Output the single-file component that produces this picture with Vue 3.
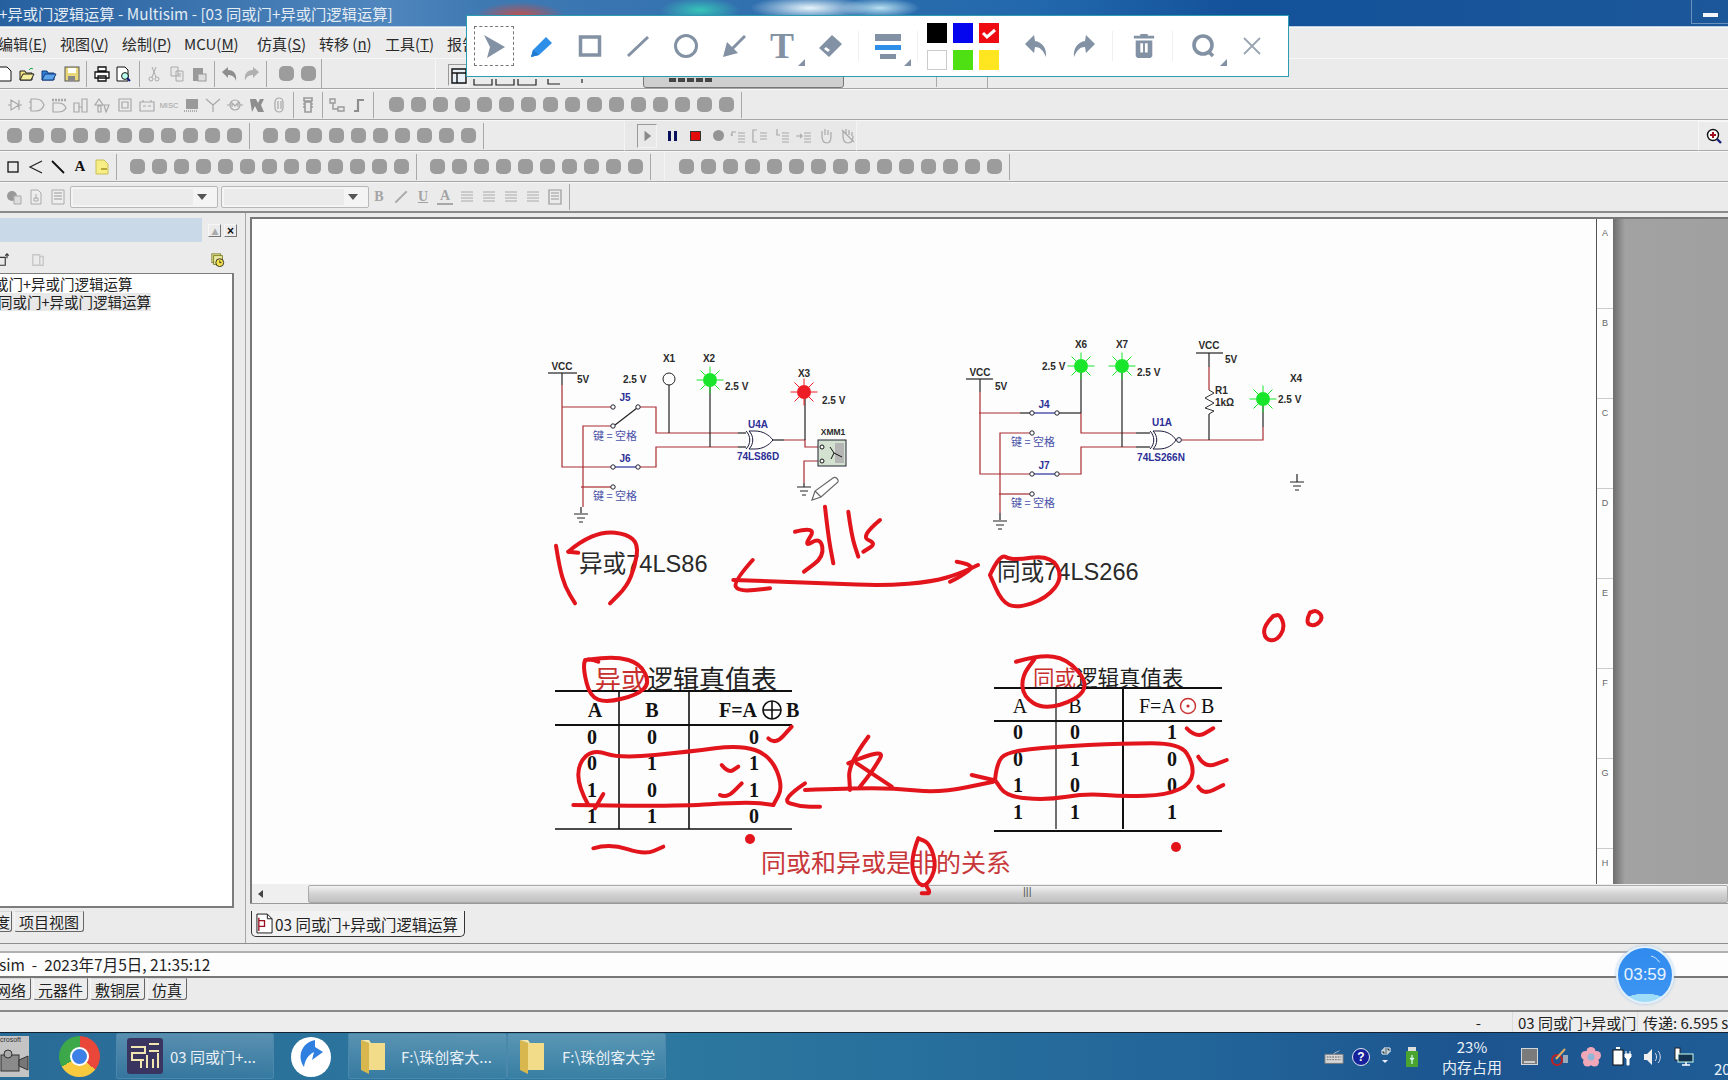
<template>
  <div class="screen">
    <div class="titlebar">
      <span class="title-text">+异或门逻辑运算 - Multisim - [03 同或门+异或门逻辑运算]</span>
      <div class="win-min"><i></i></div>
    </div>

    <div class="menu">
      <span v-for="m in menus" :key="m.t" class="menu-item">{{ m.t }}(<u>{{ m.k }}</u>)</span>
      <span class="menu-item">报告</span>
    </div>

    <div class="tb-row">
      <div class="tb-group first">
        <svg v-for="ic in fileIcons" :key="ic.id" class="ico" viewBox="0 0 16 16" v-html="ic.svg"></svg>
        <span class="sep"></span>
        <svg v-for="ic in printIcons" :key="ic.id" class="ico" viewBox="0 0 16 16" v-html="ic.svg"></svg>
        <span class="sep"></span>
        <svg v-for="ic in editIcons" :key="ic.id" class="ico" viewBox="0 0 16 16" v-html="ic.svg"></svg>
        <span class="sep"></span>
        <svg v-for="ic in undoRedo" :key="ic.id" class="ico" viewBox="0 0 16 16" v-html="ic.svg"></svg>
        <span class="sep"></span>
      </div>
      <div class="tb-group blobs pad-row1">
        <i v-for="n in 2" :key="n" class="blob"></i>
      </div>
      <div class="row1-hidden">
        <span class="view-pressed">
          <svg viewBox="0 0 16 16"><path d="M1 1h14v14H1zM1 5h14M6 5v10" fill="#e8f0f8" stroke="#111" stroke-width="1.4" /></svg>
        </span>
        <svg class="peek" viewBox="0 0 200 20">
          <path d="M2 2v6h18V2M24 2v6h18V2M46 2v6h18V2M76 2v5h12M110 2v4" fill="none" stroke="#222" stroke-width="1.2" />
        </svg>
        <span class="view-btn"><i></i></span>
        <span class="sim-edge"></span>
      </div>
    </div>

    <div class="tb-row">
      <div class="tb-group comps">
        <svg v-for="ic in compIcons" :key="ic.id" class="ico" viewBox="0 0 16 16" v-html="ic.svg"></svg>
        <span class="sep"></span>
        <svg class="ico" viewBox="0 0 16 16"><path d="M4 1h8v3H4zM5 5h6v10H5zM3 7h2M11 7h2M3 10h2M11 10h2" fill="none" stroke="#9a9a9a" stroke-width="1.6" /></svg>
        <span class="sep"></span>
        <svg class="ico" viewBox="0 0 16 16"><path d="M1 2h5v4H1zM9 10h6v4H9zM4 6v6h5" fill="none" stroke="#9a9a9a" stroke-width="1.4" /></svg>
        <svg class="ico" viewBox="0 0 16 16"><path d="M3 14h4V3h6" fill="none" stroke="#8e8e8e" stroke-width="2.2" /></svg>
        <span class="sep"></span>
      </div>
      <div class="tb-group blobs pad-row2">
        <i v-for="n in 16" :key="n" class="blob"></i>
        <span class="sep end"></span>
      </div>
    </div>

    <div class="tb-row">
      <div class="tb-group blobs pad-row3a">
        <i v-for="n in 11" :key="n" class="blob"></i>
        <span class="sep end"></span>
      </div>
      <div class="tb-group blobs pad-row3b">
        <i v-for="n in 10" :key="n" class="blob"></i>
        <span class="sep end"></span>
      </div>
      <div class="sim-group">
        <span class="play"><svg viewBox="0 0 12 16"><path d="M2 1l9 7-9 7z" fill="#8b8b8b" /></svg></span>
        <span class="pause"><i></i><i></i></span>
        <span class="stop"></span>
        <span class="rec"></span>
        <svg v-for="ic in simIcons" :key="ic.id" class="ico" viewBox="0 0 16 16" v-html="ic.svg"></svg>
      </div>
      <div class="zoom-group">
        <svg class="ico" viewBox="0 0 16 16">
          <circle cx="7" cy="7" r="5.5" fill="#fff" stroke="#111" stroke-width="1.4" />
          <path d="M7 4v6M4 7h6" stroke="#a01020" stroke-width="2" />
          <path d="M11 11l4 4" stroke="#16207a" stroke-width="2.4" />
        </svg>
      </div>
    </div>

    <div class="tb-row">
      <div class="tb-group draw">
        <svg class="ico" viewBox="0 0 16 16"><rect x="2" y="3" width="10" height="10" fill="none" stroke="#111" stroke-width="1.3" /></svg>
        <svg class="ico" viewBox="0 0 16 16"><path d="M14 2L2 8l12 6" fill="none" stroke="#222" stroke-width="1.2" /></svg>
        <svg class="ico" viewBox="0 0 16 16"><path d="M2 2l12 12" stroke="#111" stroke-width="1.8" /></svg>
        <span class="draw-a">A</span>
        <svg class="ico" viewBox="0 0 16 16"><path d="M2 1h8l4 4v10H2z" fill="#f7ee86" stroke="#c9bf5a" /><path d="M7 10h6" stroke="#b9a93a" stroke-width="2" /></svg>
        <span class="sep"></span>
      </div>
      <div class="tb-group blobs pad-row4a">
        <i v-for="n in 13" :key="n" class="blob"></i>
        <span class="sep end"></span>
      </div>
      <div class="tb-group blobs pad-row4b">
        <i v-for="n in 10" :key="n" class="blob"></i>
        <span class="sep end"></span>
      </div>
      <div class="tb-group blobs pad-row4c">
        <i v-for="n in 15" :key="n" class="blob"></i>
        <span class="sep end"></span>
      </div>
    </div>

    <div class="tb-row last">
      <div class="tb-group format">
        <svg v-for="ic in fmtIcons" :key="ic.id" class="ico" viewBox="0 0 16 16" v-html="ic.svg"></svg>
        <div class="combo"><span class="combo-in"></span><span class="caret"></span></div>
        <div class="combo"><span class="combo-in"></span><span class="caret"></span></div>
        <b class="fmt b">B</b>
        <span class="fmt i"></span>
        <span class="fmt u">U</span>
        <span class="fmt a">A</span>
        <svg v-for="n in 4" :key="n" class="ico" viewBox="0 0 16 16"><path d="M2 3h12M2 6h12M2 9h12M2 12h12" stroke="#aaa" stroke-width="1" /></svg>
        <svg class="ico" viewBox="0 0 16 16"><path d="M2 1h12v14H2zM4 4h8M4 7h8M4 10h8" fill="none" stroke="#999" stroke-width="1.2" /></svg>
        <span class="sep end"></span>
      </div>
    </div>

    <div class="work">
      <aside class="panel">
        <div class="panel-head">
          <span class="panel-title"></span>
          <span class="mini-btn up">▴</span>
          <span class="mini-btn">×</span>
        </div>
        <div class="panel-tools">
          <svg class="small-ico" viewBox="0 0 16 16"><path d="M-2 5h8v9h-8zM8 1v5M6 3l2-2 2 2" fill="none" stroke="#333" stroke-width="1.3" /></svg>
          <svg class="small-ico gray" viewBox="0 0 16 16"><path d="M2 2h8v12H2zM10 4h4v10h-4" fill="none" stroke="#c8c8c8" stroke-width="1.6" /></svg>
          <svg class="small-ico clock" viewBox="0 0 16 16">
            <rect x="1" y="1" width="10" height="10" fill="#e9e9a0" stroke="#7a7a20" />
            <rect x="3" y="3" width="10" height="10" fill="#e9e9a0" stroke="#7a7a20" />
            <circle cx="10" cy="11" r="4.5" fill="#f5e34a" stroke="#222" />
            <path d="M10 8.5V11h2" fill="none" stroke="#222" />
          </svg>
        </div>
        <div class="tree">
          <div class="tree-row one">或门+异或门逻辑运算</div>
          <div class="tree-row two">同或门+异或门逻辑运算</div>
        </div>
        <div class="panel-tabs">
          <span class="tab clipped">度</span>
          <span class="tab">项目视图</span>
        </div>
      </aside>

      <section class="doc">
        <div class="sheet-row">
          <div class="sheet"></div>
          <div class="ruler">
            <span v-for="l in rulerLetters" :key="l">{{ l }}</span>
          </div>
          <div class="outside"></div>
        </div>
        <div class="hscroll">
          <span class="arrow-left"></span>
          <div class="thumb"><span class="grip">|||</span></div>
        </div>
        <div class="doc-tabs">
          <div class="doc-tab">
            <svg class="doc-ico" viewBox="0 0 18 22"><path d="M1 1h11l5 5v15H1z" fill="#fff" stroke="#111" /><path d="M12 1v5h5" fill="none" stroke="#111" /><path d="M3 5v14M3 8h6v6H3" fill="none" stroke="#9a1020" stroke-width="1.4" /></svg>
            <span>03 同或门+异或门逻辑运算</span>
          </div>
        </div>
      </section>
    </div>

    <div class="log">
      <div class="log-line">sim&nbsp; -&nbsp; 2023年7月5日, 21:35:12</div>
      <div class="log-tabs">
        <span class="tab clip-left">网络</span>
        <span class="tab">元器件</span>
        <span class="tab">敷铜层</span>
        <span class="tab">仿真</span>
      </div>
    </div>

    <div class="status">
      <span class="st-dash">-</span>
      <span class="st-cell name">03 同或门+异或门</span>
      <span class="st-cell">传递: 6.595 s</span>
    </div>

    <footer class="taskbar">
      <div class="cam-app">
        <span class="cam-text">crosoft</span>
        <svg viewBox="0 0 30 30"><rect x="1" y="9" width="18" height="16" fill="#8b8b8b" stroke="#333" /><path d="M19 14l9-4v14l-9-4z" fill="#777" stroke="#333" /><circle cx="8" cy="8" r="4" fill="#aaa" stroke="#333" /></svg>
      </div>
      <div class="chrome"><i></i></div>
      <div class="task active">
        <svg class="task-ico" viewBox="0 0 36 36">
          <rect width="36" height="36" rx="3" fill="#3a3560" />
          <path d="M4 9h14v6H5v7h12M22 6h10M22 13h10M14 30V21M20 30V17M26 30V21M31 30V15" fill="none" stroke="#f2e6b0" stroke-width="2" />
        </svg>
        <span>03 同或门+...</span>
      </div>
      <div class="feather">
        <svg viewBox="0 0 40 40"><ellipse cx="20" cy="20" rx="20" ry="20" fill="#fff" /><path d="M24 3C10 6 6 20 13 30c1-7 4-12 10-15l-2 8 11-8-8-5z" fill="#2f7fe0" /></svg>
      </div>
      <div class="task folder-task wide">
        <svg class="folder" viewBox="0 0 26 36"><path d="M1 2l8 3v31l-8-4z" fill="#d8b84e" /><path d="M9 5h16v27H9z" fill="#f2dc8a" /><path d="M1 2h8l2 3H9z" fill="#f7e7a8" /></svg>
        <span>F:\珠创客大...</span>
      </div>
      <div class="task folder-task second">
        <svg class="folder" viewBox="0 0 26 36"><path d="M1 2l8 3v31l-8-4z" fill="#d8b84e" /><path d="M9 5h16v27H9z" fill="#f2dc8a" /><path d="M1 2h8l2 3H9z" fill="#f7e7a8" /></svg>
        <span>F:\珠创客大学</span>
      </div>
      <div class="tray">
        <svg class="t-ico kb" viewBox="0 0 22 16"><path d="M1 5h20v10H1z" fill="#d8d8d8" stroke="#777" /><path d="M3 8h16M3 11h16" stroke="#888" stroke-width="1.4" stroke-dasharray="2 1" /><path d="M11 5c0-3 5-2 6-4" fill="none" stroke="#bbb" /></svg>
        <span class="t-help">?</span>
        <div class="t-chevron"><svg viewBox="0 0 10 8"><path d="M3 1h6v4H3zM1 3h6v4H1z" fill="#134" stroke="#fff" /></svg><i></i></div>
        <svg class="t-usb" viewBox="0 0 12 20"><rect x="2" width="8" height="5" fill="#ddd" /><rect y="4" width="12" height="16" rx="1" fill="#4aa52e" /><path d="M6 8v9M4 11l2 2 2-2" fill="none" stroke="#dff" stroke-width="1.2" /></svg>
        <div class="mem"><span>23%</span><span>内存占用</span></div>
        <span class="t-box"><i></i></span>
        <svg class="t-ico" viewBox="0 0 20 20"><circle cx="7" cy="13" r="5" fill="none" stroke="#c02020" stroke-width="2" /><path d="M6 12L15 2" stroke="#e0b060" stroke-width="2" /><rect x="13" y="8" width="5" height="8" fill="#9ab" /></svg>
        <svg class="t-ico" viewBox="0 0 20 20"><g fill="#f0a8b8"><circle cx="10" cy="4.5" r="4.5" /><circle cx="15.5" cy="8.5" r="4.5" /><circle cx="13.5" cy="15" r="4.5" /><circle cx="6.5" cy="15" r="4.5" /><circle cx="4.5" cy="8.5" r="4.5" /></g><circle cx="10" cy="10" r="3.5" fill="#8fb6d8" /></svg>
        <svg class="t-ico" viewBox="0 0 20 20"><rect x="1" y="3" width="10" height="15" fill="#fff" stroke="#111" /><path d="M4 1h4" stroke="#fff" stroke-width="2" /><path d="M13 7h6v3l-2 2v6h-2v-6l-2-2zM14 4v3M18 4v3" fill="#fff" stroke="#fff" /></svg>
        <svg class="t-ico" viewBox="0 0 20 20"><path d="M1 7h3l5-5v16l-5-5H1z" fill="#eee" /><path d="M12 6c2 2 2 6 0 8M15 4c3 3 3 9 0 12" fill="none" stroke="#dde" /></svg>
        <svg class="t-ico" viewBox="0 0 20 20"><rect x="1" y="1" width="5" height="12" fill="#fff" stroke="#222" /><rect x="4" y="7" width="15" height="8" fill="#13324e" stroke="#cfe" /><path d="M8 18h8M12 15v3" stroke="#fff" stroke-width="1.5" /></svg>
      </div>
      <span class="clock-year">20</span>
    </footer>

    <!-- 画布上的电路、真值表和手写批注 -->
    <svg class="canvas-layer" viewBox="0 0 1728 1080">
      <polyline v-for="(w, i) in wires" :key="'w' + i" :points="w.p" :stroke="w.c" fill="none" stroke-width="1.2" />
      <circle v-for="(c, i) in terminals" :key="'t' + i" :cx="c[0]" :cy="c[1]" r="2.2" fill="#fff" stroke="#223" />
      <g v-for="(g, i) in grounds" :key="'g' + i" stroke="#222">
        <path :d="`M${g[0] - 7} ${g[1]}h14M${g[0] - 4} ${g[1] + 4}h8M${g[0] - 2} ${g[1] + 8}h4`" />
      </g>
      <g v-for="(l, i) in leds" :key="'l' + i">
        <path :d="raysOf(l)" :stroke="l.c" stroke-width="1" />
        <circle :cx="l.x" :cy="l.y" r="7" :fill="l.c" />
      </g>
      <circle cx="669" cy="379" r="6" fill="#fff" stroke="#222" />

      <!-- 异或门 / 同或门 -->
      <path class="gate" d="M746 431c5 5 5 13 0 18M749 431h6c8 0 14 4 18 9-4 5-10 9-18 9h-6c5-5 5-13 0-18z" />
      <path class="gate" d="M1150 431c5 5 5 13 0 18M1153 431h6c8 0 14 4 17 9-3 5-9 9-17 9h-6c5-5 5-13 0-18z" />
      <circle class="gate" cx="1179" cy="440" r="2.4" />

      <path d="M1209 390l5 3-9 5 9 5-9 5 9 3-5 3" fill="none" stroke="#333" />

      <rect x="818" y="440" width="28" height="26" fill="#d3e2d0" stroke="#223" />
      <rect x="835" y="443" width="9" height="20" fill="#b5b5b5" />
      <path d="M830 447l4 6 8 4M834 453l-3 6" fill="none" stroke="#111" />
      <circle cx="822" cy="447" r="2" fill="#fff" stroke="#111" />
      <circle cx="822" cy="461" r="2" fill="#fff" stroke="#111" />
      <path d="M812 500l3-9 18-13c3-2 6 2 5 4l-17 15zM815 491l6 6" fill="#fff" stroke="#666" stroke-width="1.2" />

      <text v-for="(t, i) in labels" :key="'x' + i" :x="t.x" :y="t.y" :class="t.k" :text-anchor="t.a || 'start'">{{ t.t }}</text>

      <text x="579" y="572" class="big-label">异或74LS86</text>
      <text x="997" y="580" class="big-label">同或74LS266</text>

      <!-- 真值表 -->
      <text x="595" y="689" class="tt-title"><tspan fill="#c8302f">异或</tspan>逻辑真值表</text>
      <path d="M555 691h237M555 725h237" stroke="#111" stroke-width="2" />
      <path d="M555 829h237" stroke="#111" stroke-width="1.4" />
      <path d="M619 691v138M689 691v138" stroke="#111" stroke-width="1.6" />
      <text x="595" y="717" class="cell bold" text-anchor="middle">A</text>
      <text x="652" y="717" class="cell bold" text-anchor="middle">B</text>
      <text x="719" y="717" class="cell bold">F=A</text>
      <circle cx="772" cy="710" r="9" fill="none" stroke="#111" stroke-width="1.6" />
      <path d="M763 710h18M772 701v18" stroke="#111" stroke-width="1.6" />
      <text x="786" y="717" class="cell bold">B</text>
      <g v-for="(r, i) in table1" :key="'a' + i">
        <text v-for="(v, j) in r" :key="j" :x="[592, 652, 754][j]" :y="744 + i * 26.4" class="cell bold" text-anchor="middle">{{ v }}</text>
      </g>

      <text x="1033" y="686" class="tt-title small"><tspan fill="#c8302f">同或</tspan>逻辑真值表</text>
      <path d="M994 688h228M994 721h228M994 831h228" stroke="#111" stroke-width="2" />
      <path d="M1056 688v141" stroke="#111" stroke-width="1.2" />
      <path d="M1123 688v141" stroke="#111" stroke-width="2" />
      <text x="1020" y="713" class="cell" text-anchor="middle">A</text>
      <text x="1075" y="713" class="cell" text-anchor="middle">B</text>
      <text x="1139" y="713" class="cell">F=A</text>
      <circle cx="1188" cy="706" r="7.5" fill="none" stroke="#c8302f" stroke-width="1.4" />
      <circle cx="1188" cy="706" r="1.6" fill="#c8302f" />
      <text x="1201" y="713" class="cell">B</text>
      <g v-for="(r, i) in table2" :key="'b' + i">
        <text v-for="(v, j) in r" :key="j" :x="[1018, 1075, 1172][j]" :y="739 + i * 26.6" class="cell bold" text-anchor="middle">{{ v }}</text>
      </g>

      <text x="761" y="872" class="note-red">同或和异或是非的关系</text>

      <!-- 红色手写 -->
      <path v-for="(d, i) in inkPaths" :key="'i' + i" :d="d" class="ink" />
      <circle cx="750" cy="839" r="5" fill="#e2141c" />
      <circle cx="1176" cy="847" r="5" fill="#e2141c" />
    </svg>

    <!-- 悬浮的屏幕标注工具条 -->
    <div class="annot-bar">
      <div class="tool selected">
        <svg viewBox="0 0 24 24"><path class="fill" d="M2 1l21 12L5 24l3-11z" /></svg>
      </div>
      <div class="tool"><svg viewBox="0 0 24 24"><path d="M1 23l2-7L16 3l6 6L9 21z" fill="#2e8fe8" /><path d="M1 23l2-7 6 5z" fill="#1f7ad0" /></svg></div>
      <div class="tool"><svg viewBox="0 0 24 24"><rect class="stroke" x="2.5" y="3" width="19" height="18" stroke-width="3.5" /></svg></div>
      <div class="tool"><svg viewBox="0 0 24 24"><path class="stroke" d="M2 22L22 3" stroke-width="3" /></svg></div>
      <div class="tool"><svg viewBox="0 0 24 24"><circle class="stroke" cx="12" cy="12" r="10.5" stroke-width="3" /></svg></div>
      <div class="tool"><svg viewBox="0 0 24 24"><path class="stroke" d="M23 2L10 15" stroke-width="3" /><path class="fill" d="M1 23l4-15 11 11z" /></svg></div>
      <div class="tool corner"><span class="tool-t">T</span></div>
      <div class="tool"><svg viewBox="0 0 24 24"><path class="fill" d="M14 1l10 9-13 13L1 14zM8 13l-2 2 4 3 2-2z" fill-rule="evenodd" /></svg></div>
      <span class="bar-sep"></span>
      <div class="tool corner wide-tool">
        <div class="widths"><i class="w1"></i><i class="w2"></i><i class="w3"></i></div>
      </div>
      <span class="bar-sep"></span>
      <div class="swatches">
        <i v-for="c in swatches" :key="c.c" class="swatch" :class="{ white: c.c === '#fff' }" :style="{ background: c.c }">
          <svg v-if="c.on" viewBox="0 0 20 20"><path d="M4 10l4 4 8-7" fill="none" stroke="#fff" stroke-width="3" /></svg>
        </i>
      </div>
      <span class="bar-sep hide"></span>
      <div class="tool act"><svg viewBox="0 0 24 24"><path class="fill" d="M1 10l9-9 1 6c7 1 12 7 11 16-3-7-6-10-11-10l-1 6z" /></svg></div>
      <div class="tool act"><svg viewBox="0 0 24 24"><path class="fill" d="M23 10l-9-9-1 6C6 8 1 14 2 23c3-7 6-10 11-10l1 6z" /></svg></div>
      <span class="bar-sep wider"></span>
      <div class="tool act"><svg viewBox="0 0 24 26"><path class="fill" d="M8 2V0h8v2h7v3H1V2zM3 7h18v17l-2 2H5l-2-2zM8 10v10h3V10zM13 10v10h3V10z" fill-rule="evenodd" /></svg></div>
      <span class="bar-sep wider"></span>
      <div class="tool act corner"><svg viewBox="0 0 24 24"><circle class="stroke" cx="11" cy="11" r="9" stroke-width="3.6" /><path class="stroke" d="M16 17l5 5" stroke-width="3.6" /></svg></div>
      <div class="tool act"><svg viewBox="0 0 24 24"><path d="M4 4l16 16M20 4L4 20" stroke="#9aa5b2" stroke-width="1.8" fill="none" /></svg></div>
    </div>

    <div class="timer">
      <svg class="timer-shine" viewBox="0 0 20 20"><path d="M3 3c5 1 9 4 12 9" fill="none" stroke="#d5ecff" stroke-width="1.4" /></svg>
      <span>03:59</span>
    </div>
  </div>
</template>

<script setup>
const menus = [
  { t: "编辑", k: "E" },
  { t: "视图", k: "V" },
  { t: "绘制", k: "P" },
  { t: "MCU", k: "M" },
  { t: "仿真", k: "S" },
  { t: "转移 ", k: "n" },
  { t: "工具", k: "T" },
];

const icon = (id, svg) => ({ id, svg });

const fileIcons = [
  icon("new", '<path d="M1 1h10l4 4v10H1z" fill="#fff" stroke="#111"/>'),
  icon("open", '<path d="M1 5h5l1 2h6v7H1z" fill="#f2e27a" stroke="#222"/><path d="M1 14l3-6h11l-3 6z" fill="#f7ee9c" stroke="#222"/><path d="M10 4c1-2 3-2 4-1" stroke="#1a4" fill="none"/>'),
  icon("open2", '<path d="M1 5h5l1 2h6v7H1z" fill="#2f7ed8" stroke="#143c7a"/><path d="M1 14l3-6h11l-3 6z" fill="#5ba3ea" stroke="#143c7a"/>'),
  icon("save", '<rect x="1" y="1" width="14" height="14" fill="#e9d87a" stroke="#555"/><rect x="4" y="2" width="8" height="5" fill="#fff"/><rect x="4" y="10" width="7" height="5" fill="#888"/>'),
];
const printIcons = [
  icon("print", '<path d="M4 1h8v4H4zM1 6h14v6H1zM4 10h8v5H4z" fill="#fff" stroke="#111" stroke-width="1.3"/>'),
  icon("preview", '<path d="M1 1h8l3 3v11H1z" fill="#fff" stroke="#111"/><circle cx="9" cy="10" r="3.4" fill="#bfe" stroke="#111"/><path d="M11 12l3 3" stroke="#16207a" stroke-width="2"/>'),
];
const editIcons = [
  icon("cut", '<circle cx="5" cy="13" r="2" fill="none" stroke="#aaa"/><circle cx="11" cy="13" r="2" fill="none" stroke="#aaa"/><path d="M6 11l4-10M10 11L6 1" stroke="#aaa"/>'),
  icon("copy", '<path d="M2 1h7v9H2zM7 5h7v10H7z" fill="#e8e8e8" stroke="#aaa"/><path d="M9 8h3M9 10h3" stroke="#aaa"/>'),
  icon("paste", '<rect x="2" y="2" width="10" height="13" fill="#999"/><rect x="7" y="8" width="8" height="7" fill="#ddd" stroke="#999"/>'),
];
const undoRedo = [
  icon("undo", '<path d="M1 6l6-5v3c6 0 9 4 8 11-1-4-4-6-8-6v3z" fill="#8e8e8e"/>'),
  icon("redo", '<path d="M15 6L9 1v3C3 4 0 8 1 15c1-4 4-6 8-6v3z" fill="#b0b0b0"/>'),
];

const g = 'fill="none" stroke="#a8a8a8" stroke-width="1.2"';
const compIcons = [
  icon("c1", `<path d="M1 8h3M12 8h3M4 3v10l8-5zM12 3v10" ${g}/>`),
  icon("c2", `<path d="M2 2h5c4 0 7 3 8 6-1 3-4 6-8 6H2zM0 5h2M0 11h2" ${g}/>`),
  icon("c3", `<path d="M2 6h5c4 0 7 2 8 5-1 2-4 4-8 4H2z" ${g}/><path d="M1 3h14" stroke="#a8a8a8" stroke-width="2.4" stroke-dasharray="2 1"/>`),
  icon("c4", `<path d="M1 6h5v9H1zM9 2h5v13H9zM6 10h3" ${g}/>`),
  icon("c5", `<path d="M4 2l4 6H0zM3 9h3v6H3zM9 8h5l-3 7z" ${g}/>`),
  icon("c6", `<path d="M2 2h12v12H2zM5 5h6v6H5z" ${g}/>`),
  icon("c7", `<path d="M1 5h14v9H1zM4 3v2M12 3v2M4 9h3M9 9h3" ${g}/>`),
  icon("misc", '<text x="8" y="11" text-anchor="middle" font-size="7.5" font-family="Liberation Sans" fill="#a0a0a0">MISC</text>'),
  icon("c9", '<path d="M3 2h12v10H3z" fill="#9a9a9a"/><path d="M1 14h14" stroke="#aaa" stroke-width="2" stroke-dasharray="1 1"/>'),
  icon("c10", `<path d="M8 8v7M8 8L1 2M8 8l7-6" ${g}/>`),
  icon("c11", `<circle cx="8" cy="8" r="5" ${g}/><path d="M0 8h3M13 8h3M5 10V6l3 3 3-3v4" ${g}/>`),
  icon("c12", '<path d="M1 2h6l2 4 2-4h4l-3 6 3 7H9L6 9l-3 6z" fill="#8e8e8e"/>'),
  icon("c13", `<rect x="4" y="1" width="8" height="14" rx="4" ${g}/><path d="M7 4v8M10 4v8" ${g}/>`),
];

const simIcons = [
  icon("s1", `<path d="M6 4H2v4M2 8l-1-2M8 5h7M8 8h7M8 11h7M8 14h7" ${g}/>`),
  icon("s2", `<path d="M5 2H1v12h4M8 5h7M8 8h7M8 11h7" ${g}/>`),
  icon("s3", `<path d="M3 1v6h3M8 5h7M8 8h7M8 11h7M8 14h7" ${g}/>`),
  icon("s4", `<path d="M0 8h6M4 6l2 2-2 2M8 5h7M8 8h7M8 11h7M8 14h7" ${g}/>`),
  icon("s5", `<path d="M4 8V3M7 7V1M10 7V2M13 8V4M4 8c0 5 2 7 5 7s4-2 4-7" ${g}/>`),
  icon("s6", `<path d="M3 8V3M6 7V1M9 7V2M12 8V4M3 8c0 5 2 7 5 7s5-2 5-7M2 2l12 12" ${g}/>`),
];

const fmtIcons = [
  icon("f1", '<circle cx="6" cy="7" r="5" fill="#999"/><path d="M8 7h7v8H8z" fill="#ddd" stroke="#aaa"/>'),
  icon("f2", '<path d="M3 1h7l3 3v11H3z" fill="#eee" stroke="#aaa"/><path d="M8 5v5M6 9h4v3H6z" stroke="#aaa" fill="none"/>'),
  icon("f3", '<path d="M2 1h12v14H2z" fill="#eee" stroke="#aaa"/><path d="M4 4h8M4 7h8M4 10h8" stroke="#999"/>'),
];

const rulerLetters = ["A", "B", "C", "D", "E", "F", "G", "H"];

const RED = "#a82c32";
const INK = "#222";
const wires = [
  // 异或门电路
  { c: INK, p: "548,373 577,373" },
  { c: INK, p: "562,373 562,385" },
  { c: RED, p: "562,385 562,467 613,467" },
  { c: RED, p: "562,407 611,407" },
  { c: RED, p: "640,407 656,407 656,433 738,433" },
  { c: INK, p: "738,433 747,433" },
  { c: INK, p: "615,425 637,408" },
  { c: RED, p: "611,426 583,426 583,507" },
  { c: INK, p: "581,507 581,513" },
  { c: RED, p: "640,467 656,467 656,447 738,447" },
  { c: INK, p: "738,447 747,447" },
  { c: RED, p: "581,487 611,487" },
  { c: INK, p: "669,385 669,433" },
  { c: INK, p: "710,385 710,447" },
  { c: INK, p: "772,440 784,440" },
  { c: RED, p: "784,440 805,440 805,447 818,447" },
  { c: INK, p: "805,397 805,440" },
  { c: RED, p: "818,461 804,461 804,483" },
  { c: INK, p: "804,483 804,487" },
  // 同或门电路
  { c: INK, p: "966,379 993,379" },
  { c: INK, p: "980,379 980,392" },
  { c: RED, p: "980,392 980,474 1030,474" },
  { c: RED, p: "979,413 1020,413" },
  { c: INK, p: "1020,413 1030,413" },
  { c: INK, p: "1059,413 1081,413" },
  { c: RED, p: "1081,413 1081,433 1136,433" },
  { c: INK, p: "1136,433 1151,433" },
  { c: RED, p: "1030,433 1000,433 1000,513" },
  { c: INK, p: "1000,513 1000,520" },
  { c: RED, p: "1059,474 1081,474 1081,447 1136,447" },
  { c: INK, p: "1136,447 1151,447" },
  { c: RED, p: "999,494 1030,494" },
  { c: INK, p: "1081,371 1081,413" },
  { c: INK, p: "1122,371 1122,447" },
  { c: RED, p: "1182,440 1263,440 1263,427" },
  { c: INK, p: "1263,427 1263,404" },
  { c: INK, p: "1196,353 1223,353" },
  { c: INK, p: "1209,353 1209,367" },
  { c: RED, p: "1209,367 1209,390" },
  { c: INK, p: "1209,414 1209,440" },
  { c: INK, p: "1297,474 1297,482" },
  { c: "#28309a", p: "1032,413 1057,413" },
  { c: "#28309a", p: "1032,474 1057,474" },
  { c: "#28309a", p: "613,467 638,467" },
];

const terminals = [
  [613, 407], [638, 407], [613, 426], [613, 467], [638, 467], [613, 487],
  [1032, 413], [1057, 413], [1032, 433], [1032, 474], [1057, 474], [1032, 494],
];

const grounds = [[581, 514], [804, 487], [1000, 521], [1297, 482]];

const GREEN = "#19e62a";
const leds = [
  { x: 710, y: 380, c: GREEN },
  { x: 804, y: 392, c: "#ee1c24" },
  { x: 1081, y: 366, c: GREEN },
  { x: 1122, y: 366, c: GREEN },
  { x: 1263, y: 399, c: GREEN },
];

const raysOf = (l) => {
  let d = "";
  for (let i = 0; i < 8; i++) {
    const a = (i * Math.PI) / 4;
    const x1 = (l.x + Math.cos(a) * 7).toFixed(1);
    const y1 = (l.y + Math.sin(a) * 7).toFixed(1);
    const x2 = (l.x + Math.cos(a) * 13.5).toFixed(1);
    const y2 = (l.y + Math.sin(a) * 13.5).toFixed(1);
    d += `M${x1} ${y1}L${x2} ${y2}`;
  }
  return d;
};

const labels = [
  { t: "VCC", x: 562, y: 370, k: "lbl", a: "middle" },
  { t: "5V", x: 577, y: 383, k: "lbl" },
  { t: "2.5 V", x: 623, y: 383, k: "lbl" },
  { t: "X1", x: 669, y: 362, k: "lbl", a: "middle" },
  { t: "X2", x: 709, y: 362, k: "lbl", a: "middle" },
  { t: "2.5 V", x: 725, y: 390, k: "lbl" },
  { t: "X3", x: 804, y: 377, k: "lbl", a: "middle" },
  { t: "2.5 V", x: 822, y: 404, k: "lbl" },
  { t: "J5", x: 625, y: 401, k: "blue", a: "middle" },
  { t: "J6", x: 625, y: 462, k: "blue", a: "middle" },
  { t: "键 = 空格", x: 593, y: 440, k: "key" },
  { t: "键 = 空格", x: 593, y: 500, k: "key" },
  { t: "U4A", x: 758, y: 428, k: "blue", a: "middle" },
  { t: "74LS86D", x: 758, y: 460, k: "blue", a: "middle" },
  { t: "XMM1", x: 833, y: 435, k: "lbl small", a: "middle" },
  { t: "VCC", x: 980, y: 376, k: "lbl", a: "middle" },
  { t: "5V", x: 995, y: 390, k: "lbl" },
  { t: "X6", x: 1081, y: 348, k: "lbl", a: "middle" },
  { t: "X7", x: 1122, y: 348, k: "lbl", a: "middle" },
  { t: "2.5 V", x: 1042, y: 370, k: "lbl" },
  { t: "2.5 V", x: 1137, y: 376, k: "lbl" },
  { t: "J4", x: 1044, y: 408, k: "blue", a: "middle" },
  { t: "J7", x: 1044, y: 469, k: "blue", a: "middle" },
  { t: "键 = 空格", x: 1011, y: 446, k: "key" },
  { t: "键 = 空格", x: 1011, y: 507, k: "key" },
  { t: "U1A", x: 1162, y: 426, k: "blue", a: "middle" },
  { t: "74LS266N", x: 1161, y: 461, k: "blue", a: "middle" },
  { t: "VCC", x: 1209, y: 349, k: "lbl", a: "middle" },
  { t: "5V", x: 1225, y: 363, k: "lbl" },
  { t: "R1", x: 1215, y: 394, k: "lbl" },
  { t: "1kΩ", x: 1215, y: 406, k: "lbl" },
  { t: "X4", x: 1296, y: 382, k: "lbl", a: "middle" },
  { t: "2.5 V", x: 1278, y: 403, k: "lbl" },
];

const table1 = [["0", "0", "0"], ["0", "1", "1"], ["1", "0", "1"], ["1", "1", "0"]];
const table2 = [["0", "0", "1"], ["0", "1", "0"], ["1", "0", "0"], ["1", "1", "1"]];

const swatches = [
  { c: "#000" }, { c: "#0505ee" }, { c: "#ee0c12", on: true },
  { c: "#fff" }, { c: "#4ee012" }, { c: "#ffe620" },
];

// 手写笔画，按取样时的 3 倍坐标记录，这里还原并做平滑
const strokeGroups = [
  {
    ox: 530, oy: 340,
    s: [
      [[78, 617], [88, 680], [105, 740], [135, 790]],
      [[115, 635], [150, 605], [220, 575], [290, 582], [325, 612], [315, 680], [290, 740], [240, 790]],
      [[115, 635], [145, 638]],
      [[795, 575], [862, 558], [820, 622], [872, 592], [882, 650], [822, 695]],
      [[885, 500], [895, 590], [910, 670]],
      [[955, 515], [965, 590], [985, 650]],
      [[1050, 540], [990, 590], [1040, 610], [1000, 635]],
      [[668, 660], [610, 725], [625, 755], [720, 745]],
      [[610, 720], [900, 730], [1060, 737], [1210, 725], [1290, 700], [1344, 675]],
    ],
  },
  {
    ox: 950, oy: 320,
    s: [
      [[20, 725], [80, 735], [30, 770], [0, 785]],
      [[120, 765], [150, 700], [185, 722], [300, 705], [340, 770], [290, 835], [200, 865], [155, 845], [120, 765]],
    ],
  },
  {
    ox: 540, oy: 640,
    s: [
      [[175, 65], [135, 50], [130, 90], [150, 170], [200, 188], [290, 165], [330, 130], [300, 70], [230, 50], [135, 60]],
      [[685, 295], [705, 315], [755, 260]],
      [[145, 495], [115, 440], [115, 370], [160, 328], [240, 355], [450, 335], [600, 315], [690, 345], [730, 440], [700, 495]],
      [[100, 495], [400, 500], [620, 485], [700, 495]],
      [[190, 462], [165, 505]],
      [[545, 375], [565, 400], [595, 380]],
      [[540, 465], [560, 475], [605, 430]],
      [[795, 430], [720, 480], [780, 500], [840, 500]],
      [[795, 450], [930, 445], [1060, 445], [1200, 458], [1360, 425]],
      [[985, 290], [925, 370], [930, 450]],
      [[925, 370], [1040, 320], [1000, 390], [960, 440]],
      [[950, 370], [1055, 440]],
      [[1295, 405], [1360, 420]],
      [[160, 625], [210, 610], [315, 645], [370, 620]],
      [[1135, 595], [1110, 660], [1130, 730], [1160, 740], [1190, 680], [1170, 610], [1135, 595]],
      [[1160, 740], [1175, 760], [1145, 760]],
    ],
  },
  {
    ox: 980, oy: 640,
    s: [
      [[108, 65], [180, 45], [260, 55], [325, 130], [290, 180], [190, 208], [130, 170], [125, 110], [165, 55]],
      [[45, 420], [50, 370], [80, 335], [220, 320], [430, 310], [600, 310], [640, 370], [635, 430], [560, 465], [430, 470], [320, 460], [200, 480], [80, 470], [45, 420]],
      [[620, 265], [650, 295], [700, 265]],
      [[655, 350], [675, 385], [740, 360]],
      [[655, 440], [670, 465], [730, 435]],
    ],
  },
  {
    ox: 1260, oy: 606,
    s: [
      [[40, 30], [10, 60], [15, 100], [50, 105], [75, 65], [60, 25], [40, 30]],
      [[150, 20], [135, 50], [165, 62], [190, 35], [170, 12], [150, 20]],
    ],
  },
];

const smooth = (pts) => {
  let d = `M${pts[0][0].toFixed(1)} ${pts[0][1].toFixed(1)}`;
  for (let i = 1; i < pts.length - 1; i++) {
    const mx = (pts[i][0] + pts[i + 1][0]) / 2;
    const my = (pts[i][1] + pts[i + 1][1]) / 2;
    d += `Q${pts[i][0].toFixed(1)} ${pts[i][1].toFixed(1)} ${mx.toFixed(1)} ${my.toFixed(1)}`;
  }
  const last = pts[pts.length - 1];
  d += `L${last[0].toFixed(1)} ${last[1].toFixed(1)}`;
  return d;
};

const inkPaths = strokeGroups.flatMap((grp) =>
  grp.s.map((st) => smooth(st.map(([x, y]) => [grp.ox + x / 3, grp.oy + y / 3])))
);
</script>

<style>
html,
body {
  margin: 0;
  background: #ebebeb;
}
</style>

<style scoped>
.screen {
  position: relative;
  width: 1728px;
  height: 1080px;
  overflow: hidden;
  display: flex;
  flex-direction: column;
  background: #ebebeb;
  color: #222;
  font-family: "Noto Sans CJK SC", "Liberation Sans", sans-serif;
  font-size: 14px;
}

/* 标题栏 */
.titlebar {
  position: relative;
  height: 27px;
  flex: none;
  display: flex;
  align-items: center;
  box-sizing: border-box;
  border-bottom: 1px solid #b8cde2;
  background:
    radial-gradient(ellipse 45px 14px at 520px 16px, #c2504c 0, rgba(194, 80, 76, 0) 100%),
    radial-gradient(ellipse 40px 12px at 700px 10px, #36c4b8 0, rgba(54, 196, 184, 0) 100%),
    radial-gradient(ellipse 60px 12px at 810px 8px, #e8f5fb 0, rgba(232, 245, 251, 0) 100%),
    radial-gradient(ellipse 40px 10px at 880px 8px, #b8e0f0 0, rgba(184, 224, 240, 0) 100%),
    linear-gradient(90deg, #27609f 0, #4f86bd 22%, #3f79b2 28%, #2268ac 60%, #135199 72%, #1b5799 100%);
}
.title-text {
  margin-left: -1px;
  font-size: 15.3px;
  color: #e4ecf4;
  white-space: nowrap;
}
.win-min {
  position: absolute;
  right: 0;
  top: 0;
  width: 37px;
  height: 24px;
  border: 1px solid #6a92bc;
  border-top: 0;
  border-right: 0;
  box-sizing: border-box;
}
.win-min i {
  position: absolute;
  left: 11px;
  top: 13px;
  width: 15px;
  height: 4px;
  background: #f2f6fa;
}

/* 菜单 */
.menu {
  height: 31px;
  flex: none;
  display: flex;
  align-items: center;
  gap: 14px;
  margin-left: -2px;
  font-size: 15px;
  color: #2a2a2a;
  background: #ececec;
  border-top: 1px solid #f6f6f6;
  box-sizing: border-box;
}
.menu-item {
  white-space: nowrap;
  flex: none;
  width: 48px;
}
.menu-item:nth-child(4) {
  width: 59px;
}
.menu-item:nth-child(6) {
  width: 52px;
}

/* 工具栏 */
.tb-row {
  position: relative;
  height: 31px;
  flex: none;
  display: flex;
  align-items: center;
  box-sizing: border-box;
  border-bottom: 1px solid #a6a6a6;
  border-top: 1px solid #f7f7f7;
}
.tb-row.last {
  border-bottom: 2px solid #8a8a8a;
}
.tb-group {
  display: flex;
  align-items: center;
  gap: 7px;
  height: 100%;
  flex: none;
}
.first {
  width: 268px;
  gap: 6.5px;
  margin-left: -4px;
  box-sizing: border-box;
}
.ico {
  width: 16px;
  height: 16px;
  flex: none;
  overflow: visible;
}
.sep {
  width: 1px;
  height: 26px;
  background: #a8a8a8;
  flex: none;
}
.sep.end {
  margin-left: auto;
}
.blob {
  width: 15px;
  height: 15px;
  border-radius: 5px;
  background: #9c9c9c;
  flex: none;
}
.blobs {
  box-sizing: border-box;
}
.pad-row1 {
  padding-left: 15px;
  width: 58px;
  border-right: 1px solid #a8a8a8;
}
.row1-hidden {
  position: absolute;
  left: 435px;
  top: 0;
  width: 551px;
  height: 30px;
  border-right: 1px solid #a8a8a8;
  border-left: 1px solid #f7f7f7;
}
.view-pressed {
  position: absolute;
  left: 12px;
  top: 5px;
  width: 20px;
  height: 22px;
  padding: 3px 2px;
  box-sizing: border-box;
  border: 1px solid;
  border-color: #999 #f4f4f4 #f4f4f4 #999;
}
.view-pressed svg {
  display: block;
  width: 16px;
  height: 16px;
}
.peek {
  position: absolute;
  left: 36px;
  top: 18px;
  width: 200px;
  height: 20px;
}
.view-btn {
  position: absolute;
  left: 207px;
  bottom: 1px;
  width: 201px;
  height: 24px;
  border: 1px solid #777;
  border-radius: 3px;
  background: #cfcfcf;
  box-sizing: border-box;
}
.view-btn i {
  position: absolute;
  left: 25px;
  top: 13px;
  width: 44px;
  height: 4px;
  background: repeating-linear-gradient(90deg, #444 0 7px, transparent 7px 9px);
}
.sim-edge {
  position: absolute;
  right: 50px;
  top: 2px;
  height: 26px;
  width: 1px;
  background: #aaa;
}
.comps {
  width: 373px;
  box-sizing: border-box;
  gap: 6px;
}
.comps .ico:first-child {
  margin-left: 7px;
}
.pad-row2 {
  padding-left: 16px;
  width: 367px;
}
.pad-row3a {
  width: 247px;
  padding-left: 7px;
}
.pad-row3b {
  width: 234px;
  padding-left: 16px;
}
.sim-group {
  position: absolute;
  left: 624px;
  top: -1px;
  width: 233px;
  height: 31px;
  box-sizing: border-box;
  display: flex;
  align-items: center;
  gap: 6px;
  padding-left: 12px;
  background: #e8e8e8;
  border: 1px solid #f4f4f4;
  border-bottom-color: #a8a8a8;
}
.play {
  width: 20px;
  height: 24px;
  display: flex;
  align-items: center;
  justify-content: center;
  border: 1px solid;
  border-color: #9a9a9a #f4f4f4 #f4f4f4 #9a9a9a;
  box-sizing: border-box;
}
.play svg {
  width: 9px;
  height: 16px;
}
.pause {
  display: flex;
  gap: 3px;
  width: 10px;
  margin-left: 5px;
}
.pause i {
  width: 3px;
  height: 10px;
  background: #0a0f5c;
}
.stop {
  width: 11px;
  height: 10px;
  margin-left: 6px;
  background: #e20a0a;
  border: 1px solid #333;
  box-sizing: border-box;
}
.rec {
  width: 11px;
  height: 11px;
  margin-left: 6px;
  border-radius: 50%;
  background: #949494;
}
.zoom-group {
  position: absolute;
  left: 1698px;
  top: 0;
  width: 34px;
  height: 30px;
  padding: 6px 0 0 7px;
  box-sizing: border-box;
  border: 1px solid #f6f6f6;
  border-bottom-color: #a8a8a8;
}
.draw {
  width: 115px;
  gap: 6px;
  padding-left: 6px;
  box-sizing: border-box;
}
.draw-a {
  width: 16px;
  text-align: center;
  font-family: "Liberation Serif", serif;
  font-weight: 700;
  font-size: 15px;
  color: #111;
  flex: none;
}
.draw .sep {
  margin-left: auto;
}
.pad-row4a {
  width: 300px;
  padding-left: 15px;
}
.pad-row4b {
  width: 234px;
  padding-left: 15px;
}
.pad-row4c {
  width: 343px;
  padding-left: 14px;
  margin-left: 15px;
  border-left: 1px solid #f5f5f5;
}
.format {
  width: 570px;
  gap: 6px;
  padding-left: 6px;
  box-sizing: border-box;
}
.combo {
  position: relative;
  width: 148px;
  height: 22px;
  margin-left: -2px;
  background: #f4f4f4;
  border: 1px solid #b8b8b8;
  border-radius: 2px;
  box-sizing: border-box;
  flex: none;
  padding: 2px;
}
.combo + .combo {
  margin-left: -3px;
}
.combo-in {
  display: block;
  width: 120px;
  height: 16px;
  background: #ebebeb;
}
.caret {
  position: absolute;
  right: 10px;
  top: 7px;
  border: 5px solid transparent;
  border-top: 6px solid #555;
  border-bottom: 0;
}
.fmt {
  width: 16px;
  text-align: center;
  flex: none;
  color: #a4a4a4;
  font-family: "Liberation Serif", serif;
  font-size: 14px;
  font-weight: 700;
  height: 16px;
  line-height: 16px;
}
.fmt.b {
  margin-left: -4px;
}
.fmt.i {
  border-top: 2px solid #a8a8a8;
  height: 0;
  transform: rotate(-45deg);
}
.fmt.u {
  text-decoration: underline;
}
.fmt.a {
  border-bottom: 2px solid #a8a8a8;
  height: 14px;
  line-height: 14px;
}

/* 主区域 */
.work {
  flex: 1;
  display: flex;
  min-height: 0;
}
.panel {
  width: 246px;
  flex: none;
  box-sizing: border-box;
  display: flex;
  flex-direction: column;
  padding: 5px 4px 11px 0;
  border-right: 1px solid #a8a8a8;
}
.panel-head {
  height: 24px;
  flex: none;
  display: flex;
  align-items: center;
  gap: 3px;
}
.panel-title {
  width: 202px;
  height: 24px;
  background: #c9d9e8;
  margin-right: 3px;
}
.mini-btn {
  width: 13px;
  height: 13px;
  font-size: 12px;
  line-height: 12px;
  text-align: center;
  font-family: "Liberation Sans", sans-serif;
  font-weight: 700;
  border: 1px solid;
  border-color: #f7f7f7 #777 #777 #f7f7f7;
  box-sizing: border-box;
  color: #111;
}
.mini-btn.up {
  color: #aaa;
}
.panel-tools {
  height: 31px;
  flex: none;
  display: flex;
  align-items: center;
  gap: 13px;
  padding: 5px 16px 0 0;
  box-sizing: border-box;
}
.small-ico {
  width: 14px;
  height: 16px;
  flex: none;
  overflow: visible;
}
.small-ico.clock {
  margin-left: auto;
}
.small-ico.gray {
  margin-left: 4px;
}
.tree {
  flex: 1;
  background: #fff;
  border: 1px solid #7c7c7c;
  border-width: 1px 2px 2px 0;
  margin-right: 7px;
  padding-top: 1px;
  font-size: 14.5px;
  line-height: 18px;
  color: #222;
  white-space: nowrap;
  overflow: hidden;
}
.tree-row {
  width: fit-content;
}
.tree-row.one {
  margin-left: -6px;
}
.tree-row.two {
  margin-left: -2px;
  background: #e8e8e8;
}
.panel-tabs {
  height: 24px;
  flex: none;
  display: flex;
  gap: 2px;
  padding-top: 3px;
  box-sizing: border-box;
}
.tab {
  display: inline-flex;
  align-items: center;
  height: 21px;
  padding: 0 4px;
  font-size: 15px;
  box-sizing: border-box;
  border: 1px solid #666;
  border-top-color: #d8d8d8;
  border-left-color: #f7f7f7;
  border-radius: 0 0 3px 3px;
  background: #ececec;
  color: #222;
}
.tab.clipped {
  margin-left: -6px;
  padding-left: 0;
  width: 18px;
}
.doc {
  flex: 1;
  min-width: 0;
  display: flex;
  flex-direction: column;
  padding-top: 4px;
  margin-left: 4px;
}
.sheet-row {
  height: 667px;
  flex: none;
  display: flex;
  border-top: 2px solid #777;
  border-left: 2px solid #777;
  box-sizing: border-box;
}
.sheet {
  width: 1344px;
  flex: none;
  background: #fdfdfd;
}
.ruler {
  width: 17px;
  flex: none;
  display: flex;
  flex-direction: column;
  background: #fdfdfd;
  border-left: 1px solid #555;
  box-sizing: border-box;
  overflow: hidden;
}
.ruler span {
  height: 90px;
  flex: none;
  font-family: "Liberation Sans", sans-serif;
  font-size: 9px;
  line-height: 10px;
  color: #666;
  text-align: center;
  padding-top: 9px;
  box-sizing: border-box;
  border-bottom: 1px solid #ccc;
}
.outside {
  flex: 1;
  background: linear-gradient(90deg, #6e6e6e 0, #a2a2a2 12px, #a0a0a0 100%);
}
.hscroll {
  height: 19px;
  flex: none;
  display: flex;
  align-items: center;
  background: #efefef;
  border-left: 2px solid #777;
}
.arrow-left {
  width: 0;
  height: 0;
  margin: 0 45px 0 6px;
  border: 4px solid transparent;
  border-right: 5px solid #444;
  border-left: 0;
}
.thumb {
  flex: 1;
  height: 18px;
  border: 1px solid #aaa;
  border-radius: 2px;
  background: linear-gradient(#f2f2f2, #d2d2d2 50%, #c0c0c0);
  box-sizing: border-box;
  position: relative;
}
.grip {
  position: absolute;
  left: 714px;
  top: -1px;
  font-family: "Liberation Sans", sans-serif;
  font-size: 11px;
  color: #555;
}
.doc-tabs {
  height: 39px;
  flex: none;
  padding-top: 7px;
  box-sizing: border-box;
  background: #ececec;
  border-top: 1px solid #999;
}
.doc-tab {
  display: inline-flex;
  align-items: center;
  gap: 2px;
  height: 26px;
  width: 214px;
  margin-left: 1px;
  padding-left: 4px;
  box-sizing: border-box;
  background: #f2f2f2;
  border: 1px solid #333;
  border-top: 0;
  border-radius: 0 0 5px 5px;
  font-size: 15.4px;
  white-space: nowrap;
}
.doc-ico {
  width: 17px;
  height: 21px;
  flex: none;
}

/* 底部 */
.log {
  height: 67px;
  flex: none;
  box-sizing: border-box;
  padding-top: 7px;
  border-top: 1px solid #8e8e8e;
}
.log-line {
  height: 27px;
  background: #fdfdfd;
  border-top: 2px solid #b0b0b0;
  border-bottom: 2px solid #777;
  box-sizing: border-box;
  font-size: 15.5px;
  line-height: 23px;
  white-space: nowrap;
  margin-left: -1px;
}
.log-tabs {
  display: flex;
  gap: 2px;
  height: 22px;
}
.tab.clip-left {
  margin-left: -14px;
  padding-left: 2px;
  width: 45px;
  justify-content: flex-end;
}
.log-tabs .tab {
  padding: 0 4px;
  height: 22px;
}
.status {
  height: 22px;
  flex: none;
  display: flex;
  align-items: center;
  justify-content: flex-end;
  background: #ededed;
  border-top: 2px solid #8a8a8a;
  box-sizing: border-box;
  font-size: 15px;
  white-space: nowrap;
  overflow: hidden;
}
.st-dash {
  margin-right: 31px;
}
.st-cell {
  display: inline-block;
  padding-left: 5px;
  border-left: 1px solid #ddd;
  width: 85px;
}
.st-cell.name {
  width: 125px;
  overflow: hidden;
  box-sizing: border-box;
  flex: none;
}

.taskbar {
  position: relative;
  height: 48px;
  flex: none;
  display: flex;
  align-items: stretch;
  box-sizing: border-box;
  border-top: 1px solid #123;
  color: #e9f0f6;
  background: linear-gradient(90deg, #296b97 0, #2d7aa0 35%, #226599 70%, #1c548f 85%, #1f5c96 100%);
}
.cam-app {
  position: relative;
  width: 29px;
  flex: none;
  background: #c4c4c4;
  margin: 3px 0;
  overflow: hidden;
}
.cam-text {
  position: absolute;
  left: 0;
  top: 0;
  font-family: "Liberation Sans", sans-serif;
  font-size: 7px;
  color: #333;
}
.cam-app svg {
  position: absolute;
  left: 0;
  top: 10px;
  width: 30px;
  height: 30px;
}
.chrome {
  position: relative;
  width: 41px;
  height: 41px;
  margin: 3px 16px 0 30px;
  border-radius: 50%;
  flex: none;
  background: conic-gradient(from 20deg, #e9473a 0 110deg, #f7c93e 110deg 220deg, #3ca84a 220deg 340deg, #e9473a 340deg);
}
.chrome i {
  position: absolute;
  left: 11px;
  top: 11px;
  width: 19px;
  height: 19px;
  border-radius: 50%;
  background: #3d80e8;
  border: 2px solid #fff;
  box-sizing: border-box;
}
.task {
  display: flex;
  align-items: center;
  flex: none;
  height: 46px;
  box-sizing: border-box;
  border: 1px solid #4b88ac;
  border-radius: 2px;
  background: linear-gradient(rgba(255, 255, 255, 0.22), rgba(255, 255, 255, 0.05));
  font-size: 15px;
  white-space: nowrap;
}
.task.active {
  width: 158px;
  padding-left: 10px;
  gap: 7px;
}
.task-ico {
  width: 36px;
  height: 36px;
  flex: none;
}
.feather {
  width: 74px;
  flex: none;
  display: flex;
  align-items: center;
  justify-content: center;
}
.feather svg {
  width: 40px;
  height: 40px;
}
.folder-task {
  width: 159px;
  padding-left: 11px;
}
.folder {
  width: 26px;
  height: 36px;
  flex: none;
}
.folder-task.wide span {
  margin-left: 15px;
}
.folder-task.second span {
  margin-left: 17px;
}
.tray {
  position: absolute;
  left: 1324px;
  top: 0;
  height: 47px;
  display: flex;
  align-items: center;
}
.t-ico {
  width: 20px;
  height: 20px;
  flex: none;
  margin-right: 11px;
}
.kb {
  margin-right: 8px;
}
.t-help {
  width: 18px;
  height: 18px;
  border-radius: 50%;
  background: #16229a;
  border: 1px solid #dfe6f2;
  box-sizing: border-box;
  color: #fff;
  font-size: 12px;
  font-weight: 700;
  line-height: 16px;
  text-align: center;
  font-family: "Liberation Sans", sans-serif;
  margin-right: 11px;
}
.t-chevron {
  width: 12px;
  margin-right: 13px;
}
.t-chevron svg {
  display: block;
  width: 10px;
  height: 8px;
}
.t-chevron i {
  display: block;
  margin: 5px 0 0 1px;
  border: 3px solid transparent;
  border-top-color: #eef;
  width: 0;
}
.t-usb {
  width: 12px;
  height: 20px;
  margin-right: 18px;
}
.mem {
  width: 72px;
  display: flex;
  flex-direction: column;
  align-items: center;
  font-size: 15px;
  line-height: 20px;
  margin-right: 13px;
}
.t-box {
  width: 17px;
  height: 17px;
  background: #7b7b7b;
  border: 1px solid #cfd6dc;
  margin-right: 12px;
  box-sizing: border-box;
  position: relative;
}
.t-box i {
  position: absolute;
  left: 2px;
  right: 2px;
  bottom: 1px;
  height: 2px;
  background: #ccc;
}
.clock-year {
  position: absolute;
  left: 1714px;
  top: 25px;
  font-size: 15px;
}

/* 画布层 */
.canvas-layer {
  position: absolute;
  left: 0;
  top: 0;
  width: 1728px;
  height: 1080px;
  pointer-events: none;
}
.lbl {
  font-family: "Liberation Sans", sans-serif;
  font-size: 10px;
  font-weight: 700;
  fill: #2b2b2b;
}
.lbl.small {
  font-size: 8.5px;
}
.blue {
  font-family: "Liberation Sans", sans-serif;
  font-size: 10px;
  font-weight: 700;
  fill: #2c2f96;
}
.key {
  font-family: "Noto Sans CJK SC", sans-serif;
  font-size: 11px;
  fill: #4a52a8;
}
.gate {
  fill: #fff;
  stroke: #1c1c3c;
  stroke-width: 1;
}
.big-label {
  font-family: "Liberation Sans", "Noto Sans CJK SC", sans-serif;
  font-size: 23.6px;
  fill: #2a2a2a;
}
.tt-title {
  font-family: "Noto Sans CJK SC", sans-serif;
  font-size: 26px;
  fill: #222;
}
.tt-title.small {
  font-size: 21.5px;
}
.cell {
  font-family: "Liberation Serif", serif;
  font-size: 20px;
  fill: #111;
}
.cell.bold {
  font-weight: 700;
}
.note-red {
  font-family: "Noto Sans CJK SC", sans-serif;
  font-size: 25px;
  fill: #c8383a;
}
.ink {
  fill: none;
  stroke: #e2141c;
  stroke-width: 4;
  stroke-linecap: round;
  stroke-linejoin: round;
}

/* 标注工具条 */
.annot-bar {
  position: absolute;
  left: 466px;
  top: 15px;
  width: 823px;
  height: 62px;
  box-sizing: border-box;
  display: flex;
  align-items: center;
  padding-left: 7px;
  background: #fff;
  border: 1px solid #2d9cb0;
}
.tool {
  position: relative;
  width: 40px;
  height: 40px;
  margin-right: 8px;
  display: flex;
  align-items: center;
  justify-content: center;
  flex: none;
  box-sizing: border-box;
}
.tool svg {
  width: 24px;
  height: 24px;
}
.tool.selected {
  border: 1px dashed #777;
}
.tool .fill {
  fill: #8291a3;
}
.tool .stroke {
  fill: none;
  stroke: #8291a3;
}
.tool-t {
  font-family: "Liberation Serif", serif;
  font-size: 36px;
  font-weight: 700;
  color: #8291a3;
  line-height: 36px;
}
.corner::after {
  content: "";
  position: absolute;
  right: -3px;
  bottom: 0;
  border-left: 7px solid transparent;
  border-bottom: 7px solid #8291a3;
}
.wide-tool {
  margin-right: 9px;
}
.widths {
  width: 26px;
  display: flex;
  flex-direction: column;
  gap: 4px;
}
.widths i {
  display: block;
  background: #8291a3;
}
.w1 {
  height: 7px;
}
.widths .w2 {
  height: 5px;
  background: #2e8fe8;
}
.w3 {
  height: 5px;
  width: 16px;
  margin: 0 auto;
}
.bar-sep {
  width: 1px;
  height: 30px;
  margin-right: 9px;
  background: #eef0f2;
  flex: none;
}
.bar-sep.hide {
  background: none;
  margin-right: 16px;
}
.bar-sep.wider {
  margin-right: 11px;
}
.swatches {
  display: grid;
  grid-template-columns: repeat(3, 20px);
  grid-auto-rows: 20px;
  gap: 7px 6px;
  flex: none;
}
.swatch {
  display: block;
}
.swatch.white {
  border: 1px solid #ccc;
  box-sizing: border-box;
}
.swatch svg {
  display: block;
}

/* 倒计时气泡 */
.timer {
  position: absolute;
  left: 1616px;
  top: 946px;
  width: 58px;
  height: 58px;
  border-radius: 50%;
  box-sizing: border-box;
  border: 2px solid #e2f0fb;
  display: flex;
  align-items: center;
  justify-content: center;
  color: #e8f4ff;
  font-family: "Liberation Sans", sans-serif;
  font-size: 17px;
  background:
    radial-gradient(ellipse 40px 18px at 50% 105%, #9fdcf7 0, #9fdcf7 60%, rgba(159, 220, 247, 0) 62%),
    linear-gradient(#2f8bee, #3f95f2);
  box-shadow: 0 0 3px rgba(120, 170, 220, 0.7);
}
.timer-shine {
  position: absolute;
  right: 9px;
  top: 6px;
  width: 14px;
  height: 14px;
}
</style>
